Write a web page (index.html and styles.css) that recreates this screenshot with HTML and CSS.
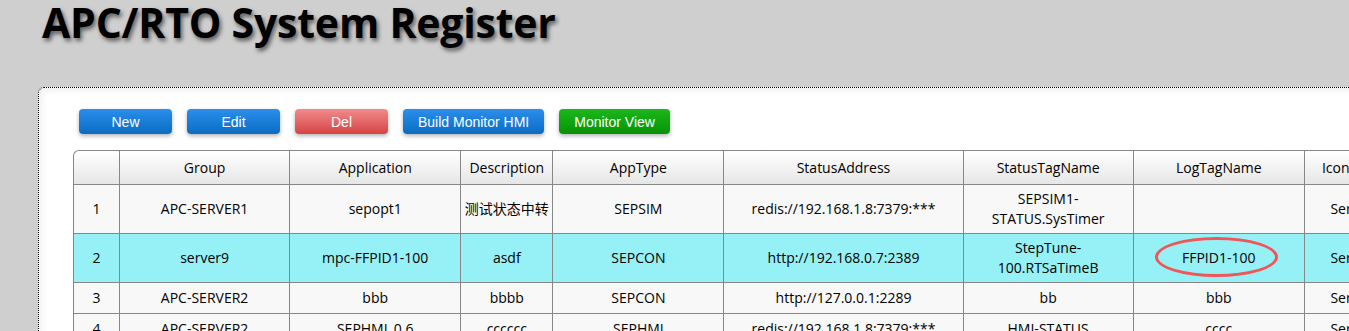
FILE: index.html
```html
<!DOCTYPE html>
<html>
<head>
    <title>APC/RTO System Register</title>
    <link rel="stylesheet" href="styles.css">
</head>
<body>
    <h1 class="page-title">APC/RTO System Register</h1>

    <div class="panel">
        <div class="toolbar">
            <button class="btn btn-blue">New</button>
            <button class="btn btn-blue">Edit</button>
            <button class="btn btn-red">Del</button>
            <button class="btn btn-blue">Build Monitor HMI</button>
            <button class="btn btn-green">Monitor View</button>
        </div>

        <table class="grid">
            <colgroup>
                <col class="c-no">
                <col class="c-group">
                <col class="c-app">
                <col class="c-desc">
                <col class="c-type">
                <col class="c-addr">
                <col class="c-tag">
                <col class="c-log">
                <col class="c-icon">
                <col class="c-op">
            </colgroup>
            <thead>
                <tr>
                    <th></th>
                    <th>Group</th>
                    <th>Application</th>
                    <th>Description</th>
                    <th>AppType</th>
                    <th>StatusAddress</th>
                    <th>StatusTagName</th>
                    <th>LogTagName</th>
                    <th>IconType</th>
                    <th>Operation</th>
                </tr>
            </thead>
            <tbody>
                <tr>
                    <td>1</td>
                    <td>APC-SERVER1</td>
                    <td>sepopt1</td>
                    <td>测试状态中转</td>
                    <td>SEPSIM</td>
                    <td>redis://192.168.1.8:7379:***</td>
                    <td>SEPSIM1-STATUS.SysTimer</td>
                    <td></td>
                    <td>Server</td>
                    <td></td>
                </tr>
                <tr class="selected">
                    <td>2</td>
                    <td>server9</td>
                    <td>mpc-FFPID1-100</td>
                    <td>asdf</td>
                    <td>SEPCON</td>
                    <td>http://192.168.0.7:2389</td>
                    <td>StepTune-100.RTSaTimeB</td>
                    <td><span class="marked">FFPID1-100</span></td>
                    <td>Server</td>
                    <td></td>
                </tr>
                <tr>
                    <td>3</td>
                    <td>APC-SERVER2</td>
                    <td>bbb</td>
                    <td>bbbb</td>
                    <td>SEPCON</td>
                    <td>http://127.0.0.1:2289</td>
                    <td>bb</td>
                    <td>bbb</td>
                    <td>Server</td>
                    <td></td>
                </tr>
                <tr>
                    <td>4</td>
                    <td>APC-SERVER2</td>
                    <td>SEPHMI_0.6</td>
                    <td>cccccc</td>
                    <td>SEPHMI</td>
                    <td>redis://192.168.1.8:7379:***</td>
                    <td>HMI-STATUS</td>
                    <td>cccc</td>
                    <td>Server</td>
                    <td></td>
                </tr>
            </tbody>
        </table>
    </div>
</body>
</html>
```

FILE: styles.css
```css
body {
    margin: 0;
    background-color: #cfcfcf;
    font-family: "Open Sans", "Noto Sans CJK SC", sans-serif;
    overflow: hidden;
}

.page-title {
    margin: 0 0 43px 0;
    padding-left: 42px;
    font-size: 41px;
    line-height: 44px;
    letter-spacing: -0.2px;
    font-weight: bold;
    color: #000;
    text-shadow: 2px 3px 4px rgba(0, 0, 0, 0.55);
}

.panel {
    margin-left: 38px;
    width: 1500px;
    height: 400px;
    padding: 21px 0 0 34px;
    background-color: #ffffff;
    border-top: 1px dotted #000;
    border-left: 1px dotted #000;
    border-top-left-radius: 6px;
    box-shadow: inset 3px 3px 6px rgba(0, 0, 0, 0.06);
}

.toolbar {
    display: flex;
    gap: 15px;
    padding-left: 6px;
    margin-bottom: 16px;
}

.btn {
    min-width: 93px;
    height: 25px;
    padding: 0 15px;
    border: none;
    border-radius: 4px;
    color: #fff;
    font-family: "Liberation Sans", Arial, sans-serif;
    font-size: 14px;
    box-shadow: 0 2px 4px rgba(0, 0, 0, 0.3);
}

.btn-blue {
    background: linear-gradient(#2a8eec, #0a6cc2);
}

.btn-red {
    background: linear-gradient(#f28b8b, #d54444);
}

.btn-green {
    background: linear-gradient(#1bb81b, #079207);
}

.grid {
    table-layout: fixed;
    width: 1446px;
    border-collapse: separate;
    border-spacing: 0;
    border-top: 1px solid #878787;
    border-left: 1px solid #878787;
    border-top-left-radius: 6px;
    font-size: 14px;
    color: #000;
}

.grid th,
.grid td {
    border-right: 1px solid #878787;
    border-bottom: 1px solid #878787;
    padding: 4px 3px;
    text-align: center;
    line-height: 20px;
}

.grid th {
    height: 25px;
    font-weight: normal;
    background: linear-gradient(#ffffff, #e6e6e6);
}

.grid th:first-child {
    border-top-left-radius: 6px;
}

.grid td {
    height: 22px;
    background-color: #f8f8f8;
}

.grid tr.selected td {
    background-color: #96f1f7;
}

.c-no { width: 46px; }
.c-group { width: 170px; }
.c-app { width: 171px; }
.c-desc { width: 92px; }
.c-type { width: 171px; }
.c-addr { width: 239px; }
.c-tag { width: 170px; }
.c-log { width: 171px; }
.c-icon { width: 94px; }
.c-op { width: 120px; }

.marked {
    position: relative;
}

.marked::after {
    content: "";
    position: absolute;
    left: -27px;
    right: -23px;
    top: -11px;
    bottom: -10px;
    border: 3px solid #f05558;
    border-radius: 50%;
}
```
